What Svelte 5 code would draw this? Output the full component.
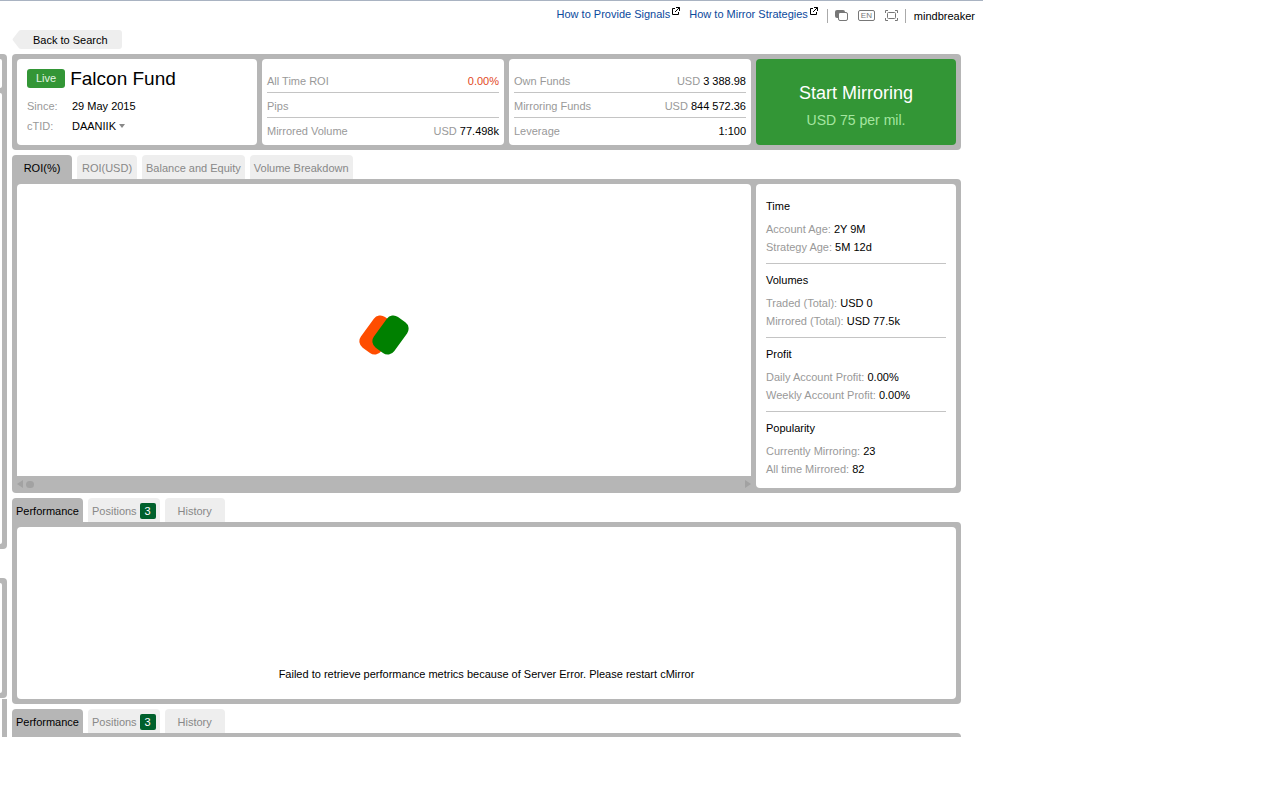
<script lang="ts">
  interface Tab {
    label: string;
    count?: number;
  }

  const chartTabs: Tab[] = [
    { label: 'ROI(%)' },
    { label: 'ROI(USD)' },
    { label: 'Balance and Equity' },
    { label: 'Volume Breakdown' }
  ];

  const detailTabs: Tab[] = [
    { label: 'Performance' },
    { label: 'Positions', count: 3 },
    { label: 'History' }
  ];

  const stats = [
    [
      { label: 'All Time ROI', value: '0.00%', negative: true },
      { label: 'Pips', value: '' },
      { label: 'Mirrored Volume', unit: 'USD', value: '77.498k' }
    ],
    [
      { label: 'Own Funds', unit: 'USD', value: '3 388.98' },
      { label: 'Mirroring Funds', unit: 'USD', value: '844 572.36' },
      { label: 'Leverage', value: '1:100' }
    ]
  ];

  const summary = [
    { title: 'Time', rows: [['Account Age:', '2Y 9M'], ['Strategy Age:', '5M 12d']] },
    { title: 'Volumes', rows: [['Traded (Total):', 'USD 0'], ['Mirrored (Total):', 'USD 77.5k']] },
    { title: 'Profit', rows: [['Daily Account Profit:', '0.00%'], ['Weekly Account Profit:', '0.00%']] },
    { title: 'Popularity', rows: [['Currently Mirroring:', '23'], ['All time Mirrored:', '82']] }
  ];

  let chartTab = $state(0);
  let detailTab = $state(0);
</script>

{#snippet external()}
  <svg class="external" width="8" height="8" viewBox="0 0 8 8" fill="none" stroke="#000" aria-hidden="true">
    <path d="M3 1.5H.5v6h6V5" />
    <path d="M4 .5h3.500v3.500M7.500 .5L3 5" />
  </svg>
{/snippet}

{#snippet tabList(tabs: Tab[], active: number, select: (i: number) => void)}
  <div class="tabs" role="tablist">
    {#each tabs as tab, i}
      <button class="tab" class:active={i === active} role="tab" aria-selected={i === active} onclick={() => select(i)}>
        {tab.label}
        {#if tab.count}
          <span class="count">{tab.count}</span>
        {/if}
      </button>
    {/each}
  </div>
{/snippet}

<div class="app">
  <header class="topbar">
    <a class="help" href="#signals">How to Provide Signals{@render external()}</a>
    <a class="help" href="#mirror">How to Mirror Strategies{@render external()}</a>
    <div class="tools">
      <button aria-label="Theme">
        <svg width="13" height="11" viewBox="0 0 13 11">
          <rect x="0" y="0" width="10" height="8" rx="2" fill="#777" />
          <rect x="3.500" y="2.500" width="9" height="8" rx="1.500" fill="#fff" stroke="#777" />
        </svg>
      </button>
      <button class="lang">EN</button>
      <button aria-label="Full screen">
        <svg width="13" height="11" viewBox="0 0 13 11" fill="none" stroke="#777">
          <path d="M.5 3V.5H3M10 .5h2.500V3M12.500 8v2.500H10M3 10.500H.5V8" />
          <rect x="2.500" y="2.500" width="8" height="6" rx="1" />
        </svg>
      </button>
    </div>
    <a class="user" href="#profile">mindbreaker</a>
  </header>

  <div class="columns">
    <aside class="side">
      <div class="frame upper"><div></div><div></div></div>
      <div class="frame lower"><div></div></div>
      <div class="rail"></div>
    </aside>

    <main>
      <a class="back" href="#search">
        <svg width="9" height="19" viewBox="0 0 9 19" aria-hidden="true">
          <path d="M9 0Q7 0 6 2L1 8.500q-1 1 0 2L6 17q1 2 3 2z" fill="#eee" />
        </svg>
        <span>Back to Search</span>
      </a>

      <section class="box head">
        <div class="card fund">
          <div class="title">
            <span class="live">Live</span>
            <h1>Falcon Fund</h1>
          </div>
          <dl>
            <dt>Since:</dt>
            <dd>29 May 2015</dd>
            <dt>cTID:</dt>
            <dd><button class="owner">DAANIIK<span class="caret"></span></button></dd>
          </dl>
        </div>

        {#each stats as group}
          <div class="card stats">
            {#each group as stat}
              <div class="stat">
                <span>{stat.label}</span>
                <span>{stat.unit ?? ''} <b class:negative={stat.negative}>{stat.value}</b></span>
              </div>
            {/each}
          </div>
        {/each}

        <button class="start">
          <span>Start Mirroring</span>
          <small>USD 75 per mil.</small>
        </button>
      </section>

      {@render tabList(chartTabs, chartTab, (i) => (chartTab = i))}
      <section class="box chart-box">
        <div class="chart-side">
          <div class="card chart">
            <svg width="52" height="42" viewBox="0 0 52 42" role="img" aria-label="Loading">
              <rect x="7" y="2" width="25" height="38" rx="8" fill="#ff4d00" transform="rotate(36 19.500 21)" />
              <rect x="20" y="2" width="25" height="38" rx="8" fill="#008000" transform="rotate(36 32.500 21)" />
            </svg>
          </div>
          <div class="scroll">
            <button aria-label="Scroll left">
              <svg width="6" height="8" viewBox="0 0 6 8"><path d="M6 0v8L0 4z" fill="#a2a2a2" /></svg>
            </button>
            <span class="thumb"></span>
            <button class="right" aria-label="Scroll right">
              <svg width="6" height="8" viewBox="0 0 6 8"><path d="M0 0v8l6-4z" fill="#a2a2a2" /></svg>
            </button>
          </div>
        </div>

        <div class="card summary">
          {#each summary as group}
            <section>
              <h2>{group.title}</h2>
              {#each group.rows as [label, value]}
                <p>{label} <b>{value}</b></p>
              {/each}
            </section>
          {/each}
        </div>
      </section>

      {@render tabList(detailTabs, detailTab, (i) => (detailTab = i))}
      <section class="box">
        <div class="card message">
          Failed to retrieve performance metrics because of Server Error. Please restart cMirror
        </div>
      </section>

      {@render tabList(detailTabs, detailTab, (i) => (detailTab = i))}
      <div class="edge"></div>
    </main>
  </div>
</div>

<style>
  :global(body) {
    background: #fff;
  }

  .app {
    width: calc(100% - 289px);
    border-top: 1px solid #a9b3c2;
    box-sizing: border-box;
    font-family: 'Liberation Sans', Arial, sans-serif;
    font-size: 11px;
    line-height: 18px;
    color: #000;
  }

  a {
    color: inherit;
    text-decoration: none;
  }

  button {
    padding: 0;
    border: 0;
    background: none;
    font: inherit;
    color: inherit;
    cursor: pointer;
  }

  b {
    font-weight: normal;
    color: #000;
  }

  h1,
  h2,
  p,
  dl,
  dd {
    margin: 0;
    font-weight: normal;
  }

  svg {
    display: block;
  }

  .topbar {
    display: flex;
    justify-content: flex-end;
    align-items: center;
    height: 29px;
    padding-right: 8px;
  }

  .help {
    display: flex;
    align-items: flex-start;
    gap: 2px;
    margin-right: 9px;
    padding-bottom: 3px;
    color: #0b499c;
  }

  .external {
    margin-top: 2px;
  }

  .tools {
    display: flex;
    align-items: center;
    gap: 10px;
    height: 14px;
    padding: 0 7px;
    border: 1px solid #aaa;
    border-width: 0 1px;
  }

  .tools .lang {
    width: 17px;
    height: 11px;
    box-sizing: border-box;
    border: 1px solid #777;
    border-radius: 2px;
    color: #777;
    font-size: 8px;
    line-height: 9px;
  }

  .user {
    margin-left: 8px;
  }

  .columns {
    display: flex;
    gap: 5px;
    padding-right: 22px;
  }

  /* Right edge of the strategy list behind the profile */
  .side {
    display: flex;
    flex-direction: column;
    width: 7px;
    padding-top: 24px;
  }

  .frame {
    display: flex;
    flex-direction: column;
    gap: 5px;
    padding: 5px 5px 5px 0;
    border-radius: 0 4px 4px 0;
    background: #b6b6b6;
  }

  .frame div {
    flex: 1;
    border-radius: 0 4px 4px 0;
    background: #fff;
  }

  .upper {
    height: 485px;
    margin-bottom: 29px;
  }

  .upper div:first-child {
    flex: 0 0 29px;
  }

  .lower {
    height: 110px;
  }

  .rail {
    flex: 1;
    margin-left: 2px;
    border-top: 1px solid #fff;
    background: #b6b6b6;
  }

  main {
    flex: 1;
    min-width: 0;
  }

  .back {
    display: flex;
    width: 110px;
    margin-bottom: 5px;
  }

  .back span {
    flex: 1;
    padding: 1px 0 0 12px;
    border-radius: 0 3px 3px 0;
    background: #eee;
  }

  .box {
    padding: 5px;
    border-radius: 4px;
    background: #b6b6b6;
  }

  .card {
    border-radius: 4px;
    background: #fff;
  }

  .head {
    display: grid;
    grid-template-columns: 240fr 242fr 242fr 200px;
    gap: 5px;
    min-height: 86px;
  }

  .fund {
    padding: 9px 10px 0;
  }

  .title {
    display: flex;
    align-items: center;
    gap: 5px;
    height: 20px;
    margin-bottom: 8px;
  }

  .live {
    padding: 0 9px;
    border-radius: 3px;
    background: #339636;
    color: #e4f5e4;
    line-height: 19px;
  }

  h1 {
    padding-top: 2px;
    font-size: 19px;
    line-height: 22px;
  }

  .fund dl {
    display: grid;
    grid-template-columns: 45px 1fr;
    line-height: 20px;
  }

  dt {
    color: #999;
  }

  .owner {
    display: flex;
    align-items: center;
    gap: 3px;
    line-height: 20px;
  }

  .caret {
    border: 3px solid transparent;
    border-top: 4px solid #888;
    border-bottom: 0;
  }

  .stats {
    padding: 9px 5px 0;
  }

  .stat {
    display: flex;
    justify-content: space-between;
    padding-top: 2px;
    line-height: 22px;
    color: #999;
  }

  .stat + .stat {
    border-top: 1px solid #c4c4c4;
  }

  .stat .negative {
    color: #e2481e;
  }

  .start {
    display: flex;
    flex-direction: column;
    align-items: center;
    justify-content: center;
    padding-top: 5px;
    border-radius: 4px;
    background: #339636;
    color: #fff;
    font-size: 18px;
    line-height: 30px;
  }

  .start small {
    color: #a5e6a0;
    font-size: 14px;
    line-height: 24px;
  }

  .tabs {
    display: flex;
    gap: 5px;
    padding-top: 5px;
  }

  .tab {
    display: flex;
    align-items: center;
    justify-content: center;
    gap: 3px;
    min-width: 60px;
    height: 24px;
    padding: 2px 4px 0;
    border-radius: 4px 4px 0 0;
    background: #eee;
    color: #888;
  }

  .tab.active {
    background: #b6b6b6;
    color: #000;
  }

  .tabs + .box {
    border-top-left-radius: 0;
  }

  .count {
    width: 16px;
    border-radius: 2px;
    background: #00602c;
    color: #fff;
    line-height: 16px;
  }

  .chart-box {
    display: grid;
    grid-template-columns: 1fr 200px;
    gap: 5px;
  }

  .chart-side {
    display: flex;
    flex-direction: column;
  }

  .chart {
    display: flex;
    flex: 1;
    align-items: center;
    justify-content: center;
    padding-top: 10px;
    border-radius: 4px 4px 0 0;
  }

  .scroll {
    display: flex;
    align-items: center;
    gap: 3px;
    height: 16px;
    margin-bottom: -4px;
  }

  .scroll .right {
    margin-left: auto;
  }

  .thumb {
    width: 8px;
    height: 7px;
    border-radius: 4px;
    background: #a2a2a2;
  }

  .summary {
    padding: 6px 10px 3px;
    color: #999;
  }

  .summary section {
    padding: 7px 0;
  }

  .summary section + section {
    border-top: 1px solid #c4c4c4;
  }

  h2 {
    margin-bottom: 5px;
    color: #000;
    font-size: 11px;
  }

  .message {
    display: flex;
    align-items: flex-end;
    justify-content: center;
    min-height: 156px;
    padding-bottom: 16px;
  }

  .edge {
    height: 4px;
    border-radius: 0 4px 0 0;
    background: #b6b6b6;
  }
</style>
